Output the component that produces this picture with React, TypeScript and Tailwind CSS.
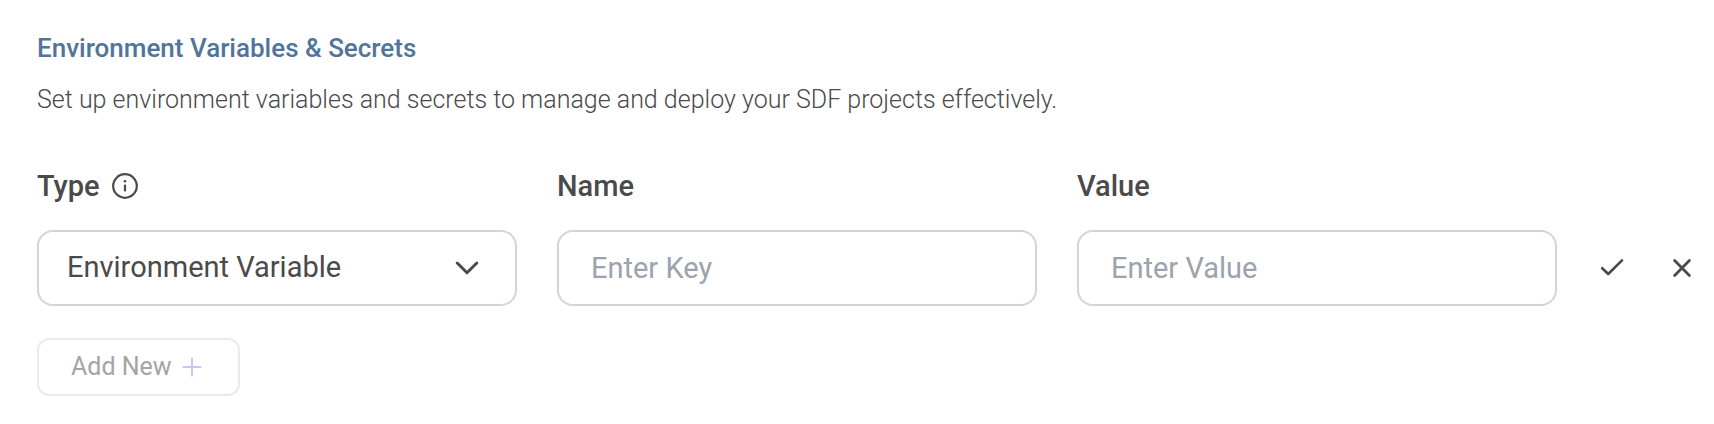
import { useState } from "react"

const fieldClass =
  "h-[76px] w-full rounded-2xl border-2 border-[#d1d5db] bg-white text-[29px] text-[#4a4a4a] outline-none placeholder:text-[#9ca3af] focus:border-gray-400"

function InfoIcon() {
  return (
    <svg viewBox="0 0 26 26" className="h-[26px] w-[26px]" fill="none" stroke="currentColor" strokeWidth="2.2" aria-hidden="true">
      <circle cx="13" cy="13" r="11.8" />
      <path d="M13 11.6v6.8" />
      <circle cx="13" cy="8.2" r="1.3" fill="currentColor" stroke="none" />
    </svg>
  )
}

function ChevronIcon() {
  return (
    <svg viewBox="0 0 24 24" className="h-6 w-6" fill="none" stroke="currentColor" strokeWidth="3" strokeLinecap="round" strokeLinejoin="round" aria-hidden="true">
      <path d="M2.2 7l9.8 9.8L21.8 7" />
    </svg>
  )
}

function CheckIcon() {
  return (
    <svg viewBox="0 0 24 24" className="h-6 w-6" fill="none" stroke="currentColor" strokeWidth="2.6" strokeLinecap="round" strokeLinejoin="round" aria-hidden="true">
      <path d="M2.2 12.2L8.2 18L22 4.4" />
    </svg>
  )
}

function CloseIcon() {
  return (
    <svg viewBox="0 0 24 24" className="h-6 w-6" fill="none" stroke="currentColor" strokeWidth="2.8" strokeLinecap="round" aria-hidden="true">
      <path d="M4.6 4.6l14.8 14.8M19.4 4.6l-14.8 14.8" />
    </svg>
  )
}

function PlusIcon() {
  return (
    <svg viewBox="0 0 20 20" className="h-5 w-5 text-[#c7c4fa]" fill="none" stroke="currentColor" strokeWidth="2" strokeLinecap="round" aria-hidden="true">
      <path d="M10 1.5v17M1.5 10h17" />
    </svg>
  )
}

export default function App() {
  const [type, setType] = useState("env")
  const [name, setName] = useState("")
  const [value, setValue] = useState("")

  return (
    <section className="bg-white pt-8 pr-[17px] pb-7 pl-[37px] font-['Roboto',sans-serif] text-[#4a4a4a]">
      <h2 className="text-[26px] leading-8 font-medium text-[#51749b]">Environment Variables &amp; Secrets</h2>
      <p className="mt-5 text-[25px] leading-8 font-light">
        Set up environment variables and secrets to manage and deploy your SDF projects effectively.
      </p>

      <form className="mt-[50px]" onSubmit={(e) => e.preventDefault()}>
        <div className="flex items-end gap-10">
          <div className="min-w-0 flex-1">
            <div className="mb-6 flex h-10 items-center gap-3">
              <label htmlFor="type" className="text-[29px] leading-10 font-medium">Type</label>
              <InfoIcon />
            </div>
            <div className="relative">
              <select
                id="type"
                value={type}
                onChange={(e) => setType(e.target.value)}
                className={`${fieldClass} appearance-none pr-20 pl-7`}
              >
                <option value="env">Environment Variable</option>
                <option value="secret">Secret</option>
              </select>
              <span className="pointer-events-none absolute inset-y-0 right-[38px] flex items-center">
                <ChevronIcon />
              </span>
            </div>
          </div>

          <div className="min-w-0 flex-1">
            <label htmlFor="name" className="mb-6 block text-[29px] leading-10 font-medium">Name</label>
            <input
              id="name"
              type="text"
              placeholder="Enter Key"
              value={name}
              onChange={(e) => setName(e.target.value)}
              className={`${fieldClass} block px-8`}
            />
          </div>

          <div className="min-w-0 flex-1">
            <label htmlFor="value" className="mb-6 block text-[29px] leading-10 font-medium">Value</label>
            <input
              id="value"
              type="text"
              placeholder="Enter Value"
              value={value}
              onChange={(e) => setValue(e.target.value)}
              className={`${fieldClass} block px-8`}
            />
          </div>

          <div className="flex h-[76px] items-center gap-10">
            <button type="submit" aria-label="Save" className="flex w-[30px] justify-center">
              <CheckIcon />
            </button>
            <button type="button" aria-label="Cancel" className="flex w-[30px] justify-center">
              <CloseIcon />
            </button>
          </div>
        </div>

        <button
          type="button"
          disabled
          className="mt-8 flex h-[58px] items-center gap-2.5 rounded-xl border-2 border-[#ebebeb] pr-9 pl-8 text-[25px] text-[#a4a4a4]"
        >
          Add New
          <PlusIcon />
        </button>
      </form>
    </section>
  )
}
